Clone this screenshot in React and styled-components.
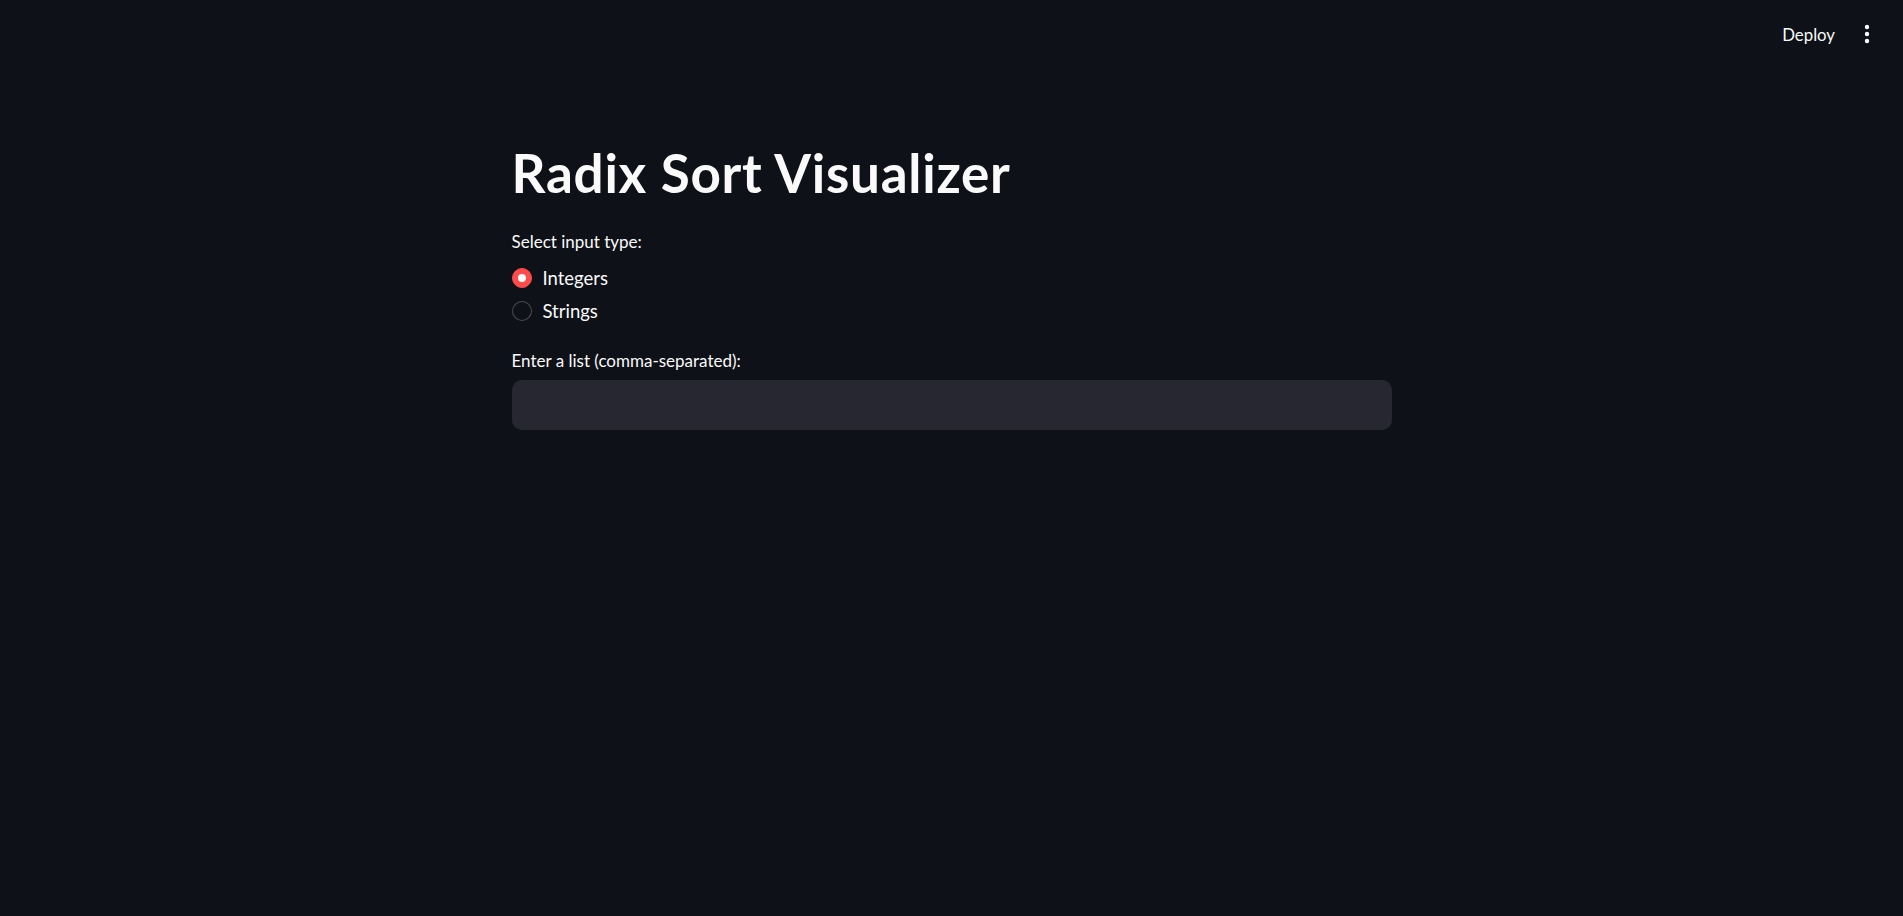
import React, { useState } from 'react'
import styled, { createGlobalStyle } from 'styled-components'

const GlobalStyle = createGlobalStyle`
  html, body {
    margin: 0;
    padding: 0;
    background: #0e1117;
    color: #fafafa;
    font-family: Lato, "Noto Sans", sans-serif;
  }
  * { box-sizing: border-box; }
`

const Page = styled.div`
  min-height: 916px;
  background: #0e1117;
`

const Header = styled.header`
  height: 68px;
  display: flex;
  justify-content: flex-end;
  align-items: center;
  padding-right: 26px;
  gap: 22px;
`

const DeployButton = styled.button`
  background: none;
  border: none;
  color: #fafafa;
  font-family: inherit;
  font-size: 16.8px;
  padding: 0;
  cursor: pointer;
`

const MenuButton = styled.button`
  background: none;
  border: none;
  padding: 0;
  width: 20px;
  height: 24px;
  display: flex;
  align-items: center;
  justify-content: center;
  cursor: pointer;
`

const Main = styled.main`
  max-width: 920px;
  margin: 0 auto;
  padding: 75px 20px 0;
`

const Title = styled.h1`
  margin: 0 0 29px;
  font-size: 53px;
  line-height: 60px;
  font-weight: 700;
  letter-spacing: 0.75px;
  color: #fafafa;
`

const Label = styled.div`
  font-size: 17px;
  line-height: 20px;
  color: #fafafa;
  margin-bottom: ${p => p.$gap}px;
`

const RadioGroup = styled.div`
  display: flex;
  flex-direction: column;
  gap: 2px;
  margin-bottom: 25px;
`

const RadioRow = styled.label`
  display: flex;
  align-items: center;
  gap: 11px;
  height: 31px;
  font-size: 18.5px;
  cursor: pointer;
`

const Circle = styled.span`
  width: 20px;
  height: 20px;
  border-radius: 50%;
  display: flex;
  align-items: center;
  justify-content: center;
  background: ${p => (p.$checked ? '#ff4b4b' : '#0e1117')};
  border: 1px solid ${p => (p.$checked ? '#ff4b4b' : 'rgba(250, 250, 250, 0.25)')};

  &::after {
    content: '';
    display: ${p => (p.$checked ? 'block' : 'none')};
    width: 8px;
    height: 8px;
    border-radius: 50%;
    background: #fafafa;
  }
`

const TextInput = styled.input`
  width: 100%;
  height: 50px;
  border: none;
  border-radius: 10px;
  background: #262730;
  color: #fafafa;
  font-family: inherit;
  font-size: 17.5px;
  padding: 0 16px;
  outline: none;
`

const options = ['Integers', 'Strings']

export default function App() {
  const [choice, setChoice] = useState('Integers')
  const [list, setList] = useState('')

  return (
    <Page>
      <GlobalStyle />
      <Header>
        <DeployButton>Deploy</DeployButton>
        <MenuButton aria-label="Main menu">
          <svg width="6" height="20" viewBox="0 0 6 20">
            <circle cx="3" cy="3" r="2.2" fill="#fafafa" />
            <circle cx="3" cy="10" r="2.2" fill="#fafafa" />
            <circle cx="3" cy="17" r="2.2" fill="#fafafa" />
          </svg>
        </MenuButton>
      </Header>
      <Main>
        <Title>Radix Sort Visualizer</Title>
        <Label $gap={10}>Select input type:</Label>
        <RadioGroup>
          {options.map(opt => (
            <RadioRow key={opt} onClick={() => setChoice(opt)}>
              <Circle $checked={choice === opt} />
              {opt}
            </RadioRow>
          ))}
        </RadioGroup>
        <Label $gap={9}>Enter a list (comma-separated):</Label>
        <TextInput value={list} onChange={e => setList(e.target.value)} />
      </Main>
    </Page>
  )
}
